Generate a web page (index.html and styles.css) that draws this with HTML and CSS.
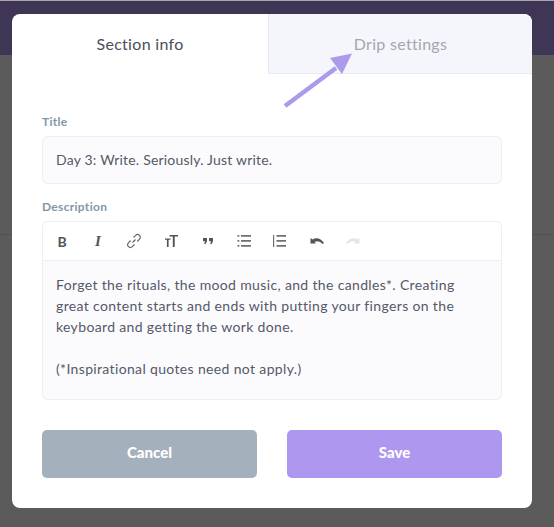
FILE: index.html
```html
<!DOCTYPE html>
<html lang="en">
<head>
<meta charset="utf-8">
<title>Section info</title>
<link rel="stylesheet" href="styles.css">
</head>
<body>
<div class="backdrop">
  <div class="topbar"></div>
  <div class="divider"></div>
  <div class="modal">
    <div class="tabs">
      <div class="tab tab-active">Section info</div>
      <div class="tab tab-idle">Drip settings</div>
    </div>
    <svg class="arrow" width="80" height="60" viewBox="0 0 80 60">
      <path d="M3 55 L54 17" stroke="#ae9aea" stroke-width="4.500" fill="none"/>
      <path d="M70 2.500 L48 7 L60 23 Z" fill="#ae9aea"/>
    </svg>
    <div class="body">
      <label class="label">Title</label>
      <div class="input">Day 3: Write. Seriously. Just write.</div>
      <label class="label label-desc">Description</label>
      <div class="editor">
        <div class="toolbar">
          <span class="tool tool-b">B</span>
          <span class="tool tool-i">I</span>
          <svg class="tool" width="16" height="16" viewBox="0 0 16 16" fill="none" stroke="#666" stroke-width="1.200"><path d="M6.500 9.500 L9.500 6.500"/><path d="M7.500 4.500 L9.700 2.400 a2.500 2.500 0 0 1 3.800 3.800 L11.400 8.500"/><path d="M8.500 11.500 L6.300 13.600 a2.500 2.500 0 0 1 -3.800 -3.800 L4.600 7.500"/></svg>
          <svg class="tool" width="16" height="16" viewBox="0 0 16 16" fill="#555"><path d="M7.500 2h8.500v1.600h-3.300V14H10.800V3.600H7.500z"/><path d="M3 5.500h5.500v1.300H6.600V14H4.900V6.800H3z"/></svg>
          <svg class="tool" width="16" height="16" viewBox="0 0 16 16" fill="#555"><path d="M5 5h4v3.300L7.700 11H6.200l.9-2.700H5z"/><path d="M11 5h4v3.300L13.700 11h-1.500l.9-2.700H11z"/></svg>
          <svg class="tool tool-list" width="16" height="16" viewBox="0 0 16 16" fill="#707070"><path d="M6 2h10v1.800H6zM6 7h10v1.800H6zM6 12h10v1.800H6z"/><path d="M2.500 2h1.800v1.800H2.500zM2.500 7h1.800v1.800H2.500zM2.500 12h1.800v1.800H2.500z"/></svg>
          <svg class="tool" width="16" height="16" viewBox="0 0 16 16" fill="#707070"><path d="M5.500 2h9.500v1.800H5.500zM5.500 7h9.500v1.800H5.500zM5.500 12h9.500v1.800H5.500z"/><path d="M2 2h1.200v12H2z"/></svg>
          <svg class="tool tool-undo" width="16" height="16" viewBox="0 0 16 16" fill="#555"><path d="M0.500 10.500 V5 L2.500 6.500 C6 4 11 5 14 10 L12.500 11 C10 8 7 7.500 4.500 9 L6 10.500 Z"/></svg>
          <svg class="tool" width="16" height="16" viewBox="0 0 16 16" fill="#e4e4e9"><path d="M13.500 10.500 V5 L11.500 6.500 C8 4 3 5 0 10 L1.500 11 C4 8 7 7.500 9.500 9 L8 10.500 Z"/></svg>
        </div>
        <div class="content">
          <p>Forget the rituals, the mood music, and the candles*. Creating great content starts and ends with putting your fingers on the keyboard and getting the work done.</p>
          <p>(*Inspirational quotes need not apply.)</p>
        </div>
      </div>
      <div class="actions">
        <button class="btn btn-cancel">Cancel</button>
        <button class="btn btn-save">Save</button>
      </div>
    </div>
  </div>
</div>
</body>
</html>
```
FILE: styles.css
```css
* { box-sizing: border-box; }
html, body { margin: 0; height: 100%; overflow: hidden; }
body { font-family: "Lato", "Noto Sans", sans-serif; color: #565868; }
.backdrop { position: relative; width: 554px; height: 527px; background: #5b5b5b; padding: 14px 22px 19px 12px; }
.topbar { position: absolute; left: 0; right: 0; top: 0; height: 55px; background: #3f3555; border-top: 1px solid #a9a7ad; }
.divider { position: absolute; left: 0; right: 0; top: 234px; height: 1px; background: #525252; }
.modal { position: relative; width: 520px; height: 494px; background: #fff; border-radius: 8px; display: flex; flex-direction: column; }
.tabs { display: flex; height: 60px; flex: none; }
.tab { display: flex; align-items: center; justify-content: center; font-size: 16px; letter-spacing: .3px; padding-bottom: 1px; }
.tab-active { width: 256px; color: #4d4d5c; }
.tab-idle { width: 264px; color: #a3a6ad; background: #f5f6fb; border-left: 1px solid #e8e9f2; border-bottom: 1px solid #e8e9f2; border-top-right-radius: 8px; }
.arrow { position: absolute; left: 270px; top: 37px; }
.body { padding: 41px 30px 0; display: flex; flex-direction: column; }
.label { font-size: 12px; font-weight: 700; color: #8297a8; line-height: 14px; letter-spacing: .3px; }
.label-desc { margin-top: 16px; }
.input { margin-top: 7px; height: 48px; border: 1px solid #eeeef5; border-radius: 5px; background: #fbfbfe; padding: 0 13px 1px; display: flex; align-items: center; font-size: 14px; letter-spacing: .2px; color: #565868; }
.editor { margin-top: 7px; height: 179px; border: 1px solid #eeeef5; border-radius: 5px; background: #fbfbfe; display: flex; flex-direction: column; }
.toolbar { height: 39px; flex: none; background: #fff; border-bottom: 1px solid #eeeef5; border-radius: 5px 5px 0 0; display: flex; align-items: center; gap: 20px; padding-left: 11px; }
.tool { flex: none; width: 16px; text-align: center; font-size: 13px; color: #555; font-family: "Liberation Serif", serif; font-weight: 700; }
.tool-b { font-family: "Lato", sans-serif; font-size: 14px; }
.tool-i { font-style: italic; font-size: 15px; }
.tool-list { margin-left: 1px; }
.tool-undo { margin-left: 3px; }
.content { padding: 13px 13px 0; font-size: 14px; letter-spacing: .35px; line-height: 21px; color: #565868; }
.content p { margin: 0 0 21px; }
.actions { margin-top: 30px; display: flex; justify-content: space-between; }
.btn { width: 215px; height: 48px; border: 0; border-radius: 5px; padding: 0 0 5px; color: #fff; font-family: "Lato", sans-serif; font-size: 15px; font-weight: 900; }
.btn-cancel { background: #a4b1bc; }
.btn-save { background: #ae97ee; }
```
